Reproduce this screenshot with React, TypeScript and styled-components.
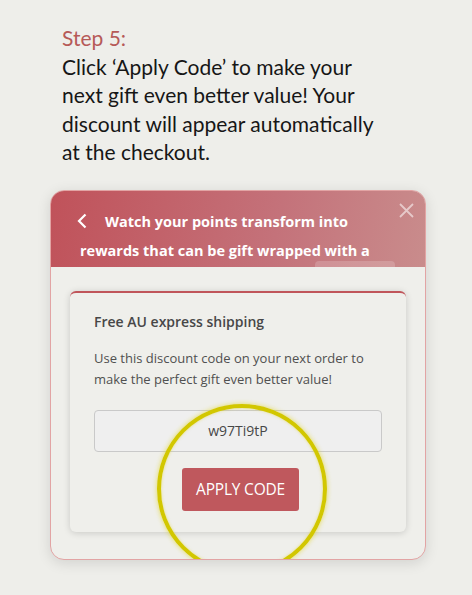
import { createGlobalStyle } from "styled-components";
import styled from "styled-components";

const GlobalStyle = createGlobalStyle`
  html, body {
    margin: 0;
    padding: 0;
    background: #eeeeea;
  }
  body {
    font-family: "Open Sans", "Liberation Sans", sans-serif;
  }
`;

const Page = styled.div`
  width: 472px;
  height: 595px;
  padding: 24px 0 0 50px;
  box-sizing: border-box;
  overflow: hidden;
`;

const Intro = styled.div`
  padding-left: 12px;
  font-family: Lato, "Liberation Sans", sans-serif;
  font-size: 21px;
  line-height: 28.6px;
  color: #161616;
`;

const StepLabel = styled.div`
  color: #b65a58;
`;

const Card = styled.div`
  position: relative;
  margin-top: 23px;
  width: 376px;
  height: 370px;
  box-sizing: border-box;
  border: 1px solid #e2a4a4;
  border-radius: 14px;
  background: #efefeb;
  box-shadow: 0 3px 14px rgba(0, 0, 0, 0.12);
  overflow: hidden;
  display: flex;
  flex-direction: column;
`;

const Header = styled.div`
  height: 76px;
  flex-shrink: 0;
  overflow: hidden;
  position: relative;
  padding: 16px 40px 0 29px;
  box-sizing: border-box;
  background: linear-gradient(100deg, #c0525a 0%, #c4727a 60%, #c98c8c 100%);
  color: #fff;
  font-size: 14.5px;
  font-weight: 700;
  line-height: 29px;
`;

const Back = styled.svg`
  width: 10px;
  height: 16px;
  margin: 0 18px 0 -3px;
  vertical-align: -2px;
`;

const Close = styled.svg`
  position: absolute;
  top: 12px;
  right: 11px;
  width: 15px;
  height: 15px;
`;

const Ghost = styled.div`
  position: absolute;
  left: 264px;
  top: 70px;
  width: 80px;
  height: 20px;
  border-radius: 4px;
  background: rgba(255, 255, 255, 0.18);
`;

const Body = styled.div`
  flex: 1;
  padding: 24px 19px 26px;
`;

const Reward = styled.div`
  height: 241px;
  box-sizing: border-box;
  border-top: 2px solid #c0555a;
  border-radius: 6px;
  background: #efefeb;
  box-shadow: 0 1px 7px rgba(0, 0, 0, 0.16);
  padding: 18px 24px 21px;
  display: flex;
  flex-direction: column;
`;

const Title = styled.div`
  font-size: 14px;
  font-weight: 600;
  color: #474747;
  line-height: 22px;
`;

const Text = styled.p`
  margin: 15px 0 0;
  font-size: 13px;
  line-height: 21px;
  color: #505050;
`;

const CodeBox = styled.div`
  margin-top: 20px;
  height: 42px;
  flex-shrink: 0;
  box-sizing: border-box;
  border: 1px solid #c9c9c9;
  border-radius: 4px;
  background: #efefef;
  display: flex;
  align-items: center;
  justify-content: center;
  font-size: 14px;
  color: #404040;
`;

const ApplyButton = styled.button`
  margin: 16px 0 0 88px;
  width: 117px;
  height: 43px;
  flex-shrink: 0;
  border: none;
  border-radius: 3px;
  background: #bd5257;
  color: #fff;
  font-family: "Open Sans", "Liberation Sans", sans-serif;
  font-size: 15.5px;
  letter-spacing: -0.2px;
`;

const Highlight = styled.div`
  position: absolute;
  left: 106px;
  top: 213px;
  width: 170px;
  height: 170px;
  box-sizing: border-box;
  border-radius: 50%;
  border: 4.5px solid #d2c700;
  background: rgba(255, 255, 255, 0.04);
  box-shadow: 0 0 5px rgba(225, 210, 0, 0.65), inset 0 0 3px rgba(225, 210, 0, 0.5);
  pointer-events: none;
`;

function App() {
  return (
    <Page>
      <GlobalStyle />
      <Intro>
        <StepLabel>Step 5:</StepLabel>
        Click ‘Apply Code’ to make your
        <br />
        next gift even better value! Your
        <br />
        discount will appear automatically
        <br />
        at the checkout.
      </Intro>
      <Card>
        <Header>
          <Back viewBox="0 0 10 16">
            <path d="M8.5 1.5 L2 8 L8.5 14.5" fill="none" stroke="#fff" strokeWidth="2.2" />
          </Back>
          Watch your points transform into rewards that can be gift wrapped with a heart
          <Close viewBox="0 0 15 15">
            <path d="M1 1 L14 14 M14 1 L1 14" stroke="rgba(255,255,255,0.55)" strokeWidth="1.8" />
          </Close>
          <Ghost />
        </Header>
        <Body>
          <Reward>
            <Title>Free AU express shipping</Title>
            <Text>
              Use this discount code on your next order to make the perfect gift even better
              value!
            </Text>
            <CodeBox>w97Ti9tP</CodeBox>
            <ApplyButton>APPLY CODE</ApplyButton>
          </Reward>
        </Body>
        <Highlight />
      </Card>
    </Page>
  );
}

export default App;
